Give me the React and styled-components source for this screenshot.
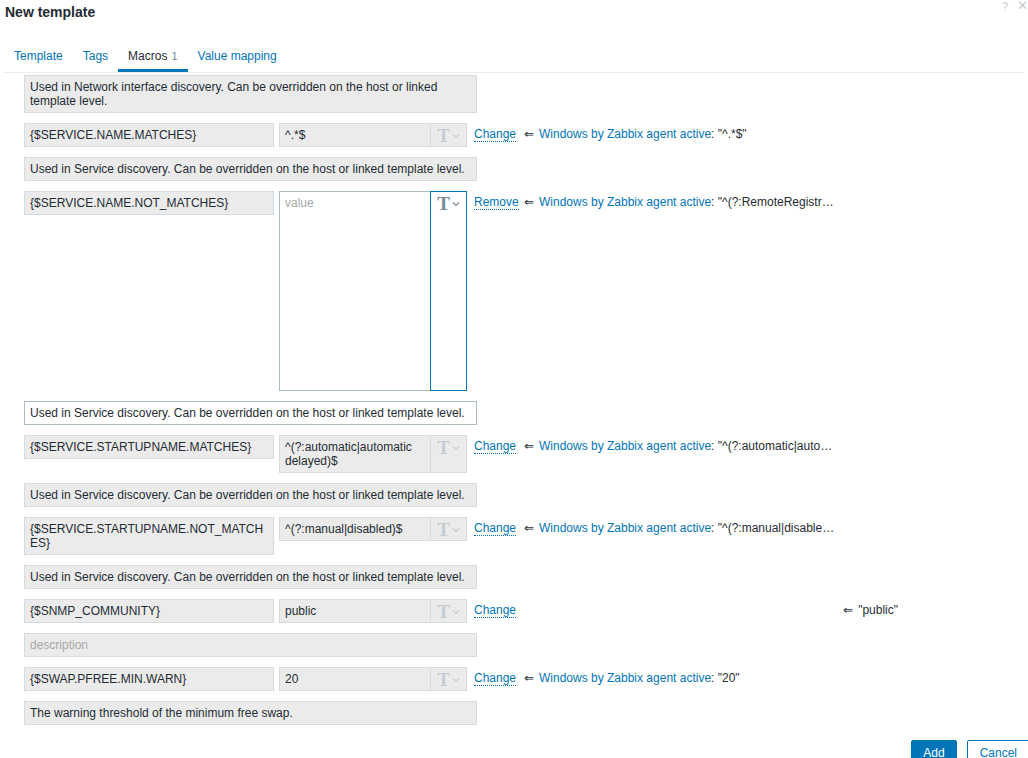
import React from 'react';
import styled, { createGlobalStyle, css } from 'styled-components';

const GlobalStyle = createGlobalStyle`
  html, body {
    margin: 0;
    padding: 0;
    background: #ffffff;
    overflow: hidden;
  }
  body {
    font-family: "Liberation Sans", Arial, sans-serif;
    font-size: 12px;
    color: #1f2c33;
  }
`;

const Dialog = styled.div`
  width: 1028px;
  height: 758px;
  overflow: hidden;
  box-sizing: border-box;
  padding: 0 4px;
  position: relative;
`;

const Header = styled.div`
  height: 43px;
  padding: 4px 1px 0;
  box-sizing: border-box;
`;

const Title = styled.h4`
  margin: 0;
  font-size: 14px;
  line-height: 16px;
  font-weight: bold;
  color: #1f2c33;
`;

const HeaderTools = styled.div`
  position: absolute;
  top: 0;
  right: 0;
  display: flex;
  gap: 9px;
  align-items: center;
  height: 12px;
  color: #c4ccd0;
  font-size: 11px;
`;

const ToolButton = styled.span`
  line-height: 12px;
  ${p => p.$close && css`font-size: 13px;`}
`;

const TabBar = styled.ul`
  display: flex;
  margin: 0;
  padding: 0;
  list-style: none;
  border-bottom: 1px solid #ebeef0;
`;

const Tab = styled.li`
  height: 29px;
  box-sizing: border-box;
  padding: 0 10px;
  line-height: 26px;
  color: ${p => (p.$active ? '#1f2c33' : '#0275b8')};
  border-bottom: 3px solid ${p => (p.$active ? '#0275b8' : 'transparent')};
`;

const TabCount = styled.sup`
  vertical-align: baseline;
  font-size: 11px;
  color: #768d99;
  margin-left: 4px;
`;

const Content = styled.div`
  padding: 2px 0 0 20px;
  display: flex;
  flex-direction: column;
  gap: 10px;
`;

const fieldBase = css`
  box-sizing: border-box;
  border: 1px solid ${p => (p.$editable ? '#acbbc2' : '#d4dce1')};
  background: ${p => (p.$editable ? '#ffffff' : '#ebebeb')};
  padding: 4px 5px;
  line-height: 14px;
  min-height: 24px;
  color: ${p => (p.$muted ? '#a8a8a8' : '#1f2c33')};
`;

const Description = styled.div`
  ${fieldBase};
  width: 453px;
`;

const MacroRow = styled.div`
  display: flex;
  align-items: flex-start;
`;

const NameField = styled.div`
  ${fieldBase};
  width: 250px;
  word-break: break-all;
`;

const ValueGroup = styled.div`
  display: flex;
  align-items: stretch;
  width: 188px;
  height: ${p => p.$height || 'auto'};
  margin-left: 5px;
`;

const ValueField = styled.div`
  ${fieldBase};
  flex: 1;
  border-right: none;
`;

const TypeButton = styled.div`
  box-sizing: border-box;
  width: 37px;
  flex: none;
  min-height: 24px;
  display: flex;
  align-items: flex-start;
  justify-content: center;
  gap: 2px;
  padding-top: 2px;
  border: 1px solid ${p => (p.$focused ? '#0275b8' : '#d4dce1')};
  background: ${p => (p.$focused ? '#ffffff' : '#ebebeb')};
  color: ${p => (p.$focused ? '#768d99' : '#c5cdd1')};
`;

const TypeGlyph = styled.span`
  font-family: "Liberation Serif", "Times New Roman", serif;
  font-weight: bold;
  font-size: 19px;
  line-height: 19px;
`;

const Chevron = styled.svg`
  width: 8px;
  height: 8px;
  margin-top: 6px;
`;

const ActionCell = styled.div`
  width: 50px;
  margin-left: 7px;
  padding-top: 4px;
  line-height: 14px;
  flex: none;
`;

const DottedLink = styled.a`
  color: #0275b8;
  text-decoration: none;
  border-bottom: 1px dotted #0275b8;
  cursor: pointer;
`;

const InheritCell = styled.div`
  width: 374px;
  padding-top: 4px;
  line-height: 14px;
  display: flex;
  justify-content: ${p => (p.$end ? 'flex-end' : 'flex-start')};
  white-space: nowrap;
`;

const Arrow = styled.span`
  margin-right: 5px;
`;

const TemplateLink = styled.a`
  color: #0275b8;
  text-decoration: none;
`;

const InheritValue = styled.span`
  display: inline-block;
  max-width: ${p => (p.$clip ? '121px' : 'none')};
  overflow: hidden;
  text-overflow: ellipsis;
  vertical-align: top;
`;

const Footer = styled.div`
  display: flex;
  justify-content: flex-end;
  gap: 10px;
  margin-top: 15px;
  margin-right: -6px;
`;

const Button = styled.button`
  height: 25px;
  box-sizing: border-box;
  padding: 0 ${p => (p.$secondary ? '12px' : '11px')};
  font-family: inherit;
  font-size: 12px;
  border-radius: 2px;
  border: 1px solid #0275b8;
  background: ${p => (p.$secondary ? '#ffffff' : '#0275b8')};
  color: ${p => (p.$secondary ? '#0275b8' : '#ffffff')};
`;

const TEMPLATE = 'Windows by Zabbix agent active';

const macros = [
  {
    name: '{$SERVICE.NAME.MATCHES}',
    value: '^.*$',
    inherited: '"^.*$"',
    description: 'Used in Service discovery. Can be overridden on the host or linked template level.',
  },
  {
    name: '{$SERVICE.NAME.NOT_MATCHES}',
    value: '',
    editing: true,
    inherited: '"^(?:RemoteRegistry|MMCSS|gupdate|SysmonLog|clr_optimization_v2.0.50727_32|clr_optimization_v4.0.30319_32)$"',
    description: 'Used in Service discovery. Can be overridden on the host or linked template level.',
  },
  {
    name: '{$SERVICE.STARTUPNAME.MATCHES}',
    value: '^(?:automatic|automatic delayed)$',
    inherited: '"^(?:automatic|automatic delayed)$"',
    description: 'Used in Service discovery. Can be overridden on the host or linked template level.',
  },
  {
    name: '{$SERVICE.STARTUPNAME.NOT_MATCHES}',
    value: '^(?:manual|disabled)$',
    inherited: '"^(?:manual|disabled)$"',
    description: 'Used in Service discovery. Can be overridden on the host or linked template level.',
  },
  {
    name: '{$SNMP_COMMUNITY}',
    value: 'public',
    inherited: '"public"',
    global: true,
    description: '',
  },
  {
    name: '{$SWAP.PFREE.MIN.WARN}',
    value: '20',
    inherited: '"20"',
    description: 'The warning threshold of the minimum free swap.',
  },
];

const TypeSelect = ({ focused }) => (
  <TypeButton $focused={focused}>
    <TypeGlyph>T</TypeGlyph>
    <Chevron viewBox="0 0 8 8">
      <path d="M1 2.5 L4 5.5 L7 2.5" fill="none" stroke="currentColor" strokeWidth="1.1" />
    </Chevron>
  </TypeButton>
);

const Macro = ({ macro }) => (
  <>
    <MacroRow>
      <NameField>{macro.name}</NameField>
      {macro.editing ? (
        <ValueGroup $height="200px">
          <ValueField $editable $muted>value</ValueField>
          <TypeSelect focused />
        </ValueGroup>
      ) : (
        <ValueGroup>
          <ValueField>{macro.value}</ValueField>
          <TypeSelect />
        </ValueGroup>
      )}
      <ActionCell>
        <DottedLink>{macro.editing ? 'Remove' : 'Change'}</DottedLink>
      </ActionCell>
      <InheritCell $end={macro.global}>
        <Arrow>⇐</Arrow>
        {!macro.global && (
          <>
            <TemplateLink>{TEMPLATE}</TemplateLink>:&nbsp;
          </>
        )}
        <InheritValue $clip={!macro.global}>{macro.inherited}</InheritValue>
      </InheritCell>
    </MacroRow>
    {macro.editing ? (
      <Description $editable>{macro.description}</Description>
    ) : macro.description ? (
      <Description>{macro.description}</Description>
    ) : (
      <Description $muted>description</Description>
    )}
  </>
);

export default function App() {
  return (
    <>
      <GlobalStyle />
      <Dialog>
        <Header>
          <Title>New template</Title>
        </Header>
        <HeaderTools>
          <ToolButton>?</ToolButton>
          <ToolButton $close>✕</ToolButton>
        </HeaderTools>
        <TabBar>
          <Tab>Template</Tab>
          <Tab>Tags</Tab>
          <Tab $active>
            Macros<TabCount>1</TabCount>
          </Tab>
          <Tab>Value mapping</Tab>
        </TabBar>
        <Content>
          <Description>
            Used in Network interface discovery. Can be overridden on the host or linked template level.
          </Description>
          {macros.map(m => (
            <Macro key={m.name} macro={m} />
          ))}
        </Content>
        <Footer>
          <Button>Add</Button>
          <Button $secondary>Cancel</Button>
        </Footer>
      </Dialog>
    </>
  );
}
